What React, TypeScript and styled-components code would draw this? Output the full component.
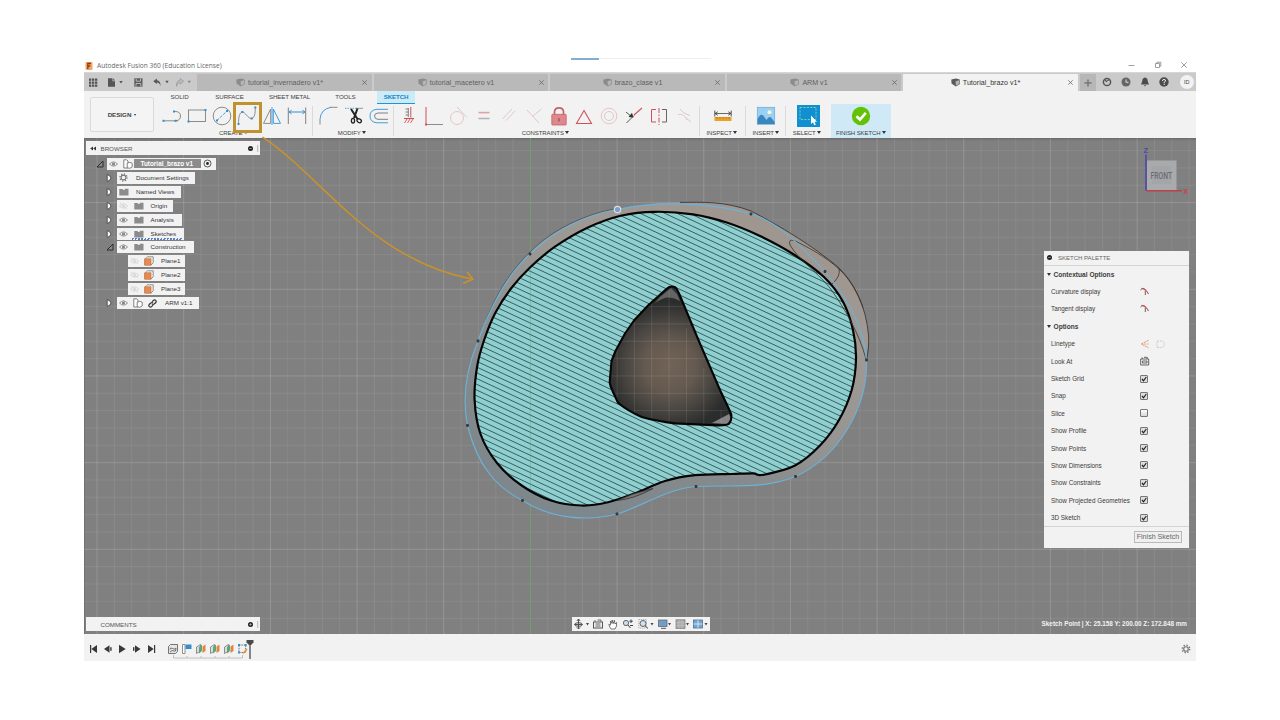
import React from "react";
import styled, { createGlobalStyle, css } from "styled-components";

const Global = createGlobalStyle`
  *{box-sizing:border-box}
  body{margin:0;background:#fff;font-family:"Liberation Sans",Arial,sans-serif;color:#3c3c3c}
  svg{display:block;flex:none}
`;

const Page = styled.div`width:1280px;height:720px;padding:57px 84px 59px;background:#fff;overflow:hidden;`;
const Window = styled.div`width:1112px;height:604px;display:flex;flex-direction:column;`;

/* title bar */
const TitleBar = styled.div`height:15px;display:flex;align-items:center;justify-content:space-between;position:relative;`;
const Title = styled.div`display:flex;align-items:center;gap:4px;padding:2px 0 0 1px;font:6.6px "Open Sans","Noto Sans",sans-serif;color:#666;white-space:nowrap;`;
const Controls = styled.div`display:flex;gap:19px;padding:1px 9.5px 0 0;align-items:center;`;
const Progress = styled.div`position:absolute;left:487px;top:1px;width:140px;height:2px;border-top:1px solid #eeeeee;`;
const ProgressFill = styled.div`width:28px;height:2px;margin-top:-1px;background:#84aed0;`;

/* document tabs */
const DocBar = styled.div`height:19px;background:#cacaca;display:flex;align-items:flex-end;border-top:1px solid #d6d6d6;`;
const Quick = styled.div`width:113px;height:17px;position:relative;display:flex;align-items:center;padding-left:4px;`;
const QuickSlot = styled.div<{ $w: number }>`width:${p => p.$w}px;display:flex;`;
const DocTab = styled.div<{ $active?: boolean }>`
  width:174.5px;height:17px;margin-right:2px;flex:none;display:flex;align-items:center;padding-left:5.5px;
  background:${p => (p.$active ? "#f2f2f2" : "#b9b9b9")};color:${p => (p.$active ? "#333" : "#5f5f5f")};border-radius:1px 1px 0 0;
`;
const DocName = styled.div`flex:1;display:flex;justify-content:center;align-items:center;gap:3px;font-size:7.1px;white-space:nowrap;padding-right:1px;`;
const DocClose = styled.div`width:14px;display:flex;justify-content:center;color:#6a6a6a;`;
const AddTab = styled.div`width:16px;height:17px;background:#b7b7b7;display:flex;align-items:center;justify-content:center;`;
const Account = styled.div`flex:1;height:18px;display:flex;align-items:center;padding-left:6px;gap:9.3px;`;
const Avatar = styled.div`width:14px;height:14px;border-radius:50%;background:#f2f2f2;font-size:5.5px;display:flex;align-items:center;justify-content:center;color:#444;margin-left:1px;`;

/* ribbon */
const Ribbon = styled.div`height:47px;background:#f2f2f2;display:flex;`;
const Workspace = styled.div`width:64px;height:35px;margin:6px 0 0 6px;border:1px solid #dadada;border-radius:2px;background:#f4f4f4;display:flex;align-items:center;justify-content:center;gap:3px;font-size:6.2px;font-weight:bold;color:#444;`;
const RibbonMain = styled.div`display:flex;flex-direction:column;`;
const RibbonTabs = styled.div`height:13px;display:flex;`;
const RibbonTab = styled.div<{ $w: number; $active?: boolean }>`
  width:${p => p.$w}px;display:flex;align-items:center;justify-content:center;font-size:6.2px;line-height:12px;padding-bottom:1px;letter-spacing:-.12px;color:#444;white-space:nowrap;
  ${p => p.$active && css`margin-left:11px;padding-bottom:0;background:#cdeaf7;border-bottom:1.5px solid #1b97d4;color:#1289c5;font-weight:bold;`}
`;
const Groups = styled.div`display:flex;height:34px;`;
const Group = styled.div<{ $w: number; $line?: boolean; $hot?: boolean }>`
  width:${p => p.$w}px;display:flex;flex-direction:column;
  background:${p => (p.$hot ? "#cfeaf6" : "linear-gradient(#dadada,#dadada) no-repeat right 2px/1px 30px")};
  ${p => !p.$line && !p.$hot && css`background:none;`}
`;
const Tools = styled.div<{ $pad: number; $center?: boolean }>`height:23px;display:flex;padding-left:${p => p.$pad}px;justify-content:${p => (p.$center ? "center" : "flex-start")};align-items:center;`;
const ToolSlot = styled.div`width:25px;display:flex;justify-content:center;position:relative;`;
const Picked = styled.div`position:absolute;left:-1.5px;top:-4px;width:29px;height:31px;border:3px solid #bf922f;`;
const GroupName = styled.div<{ $shift?: number }>`font-size:6px;letter-spacing:-.08px;display:flex;align-items:center;justify-content:center;gap:1.5px;height:11px;color:#3f3f3f;white-space:nowrap;padding-right:${p => p.$shift || 0}px;`;
const Caret = styled.i<{ $s?: number }>`display:inline-block;border:${p => p.$s || 2}px solid transparent;border-top:${p => (p.$s || 2) * 1.6}px solid #333;border-bottom:0;`;

/* viewport */
const Viewport = styled.div`height:496px;position:relative;background:linear-gradient(#6b6b6b,#808080 3px);box-shadow:inset 1px 0 #727272;`;
const Scene = styled.svg`position:absolute;left:0;top:0;overflow:visible;`;
const PanelBar = styled.div<{ $top: number }>`
  position:absolute;left:2px;top:${p => p.$top}px;width:174px;height:14px;background:#f2f2f2;display:flex;align-items:center;
  padding:0 1px 0 4px;font-size:6.2px;color:#555;gap:4.5px;
`;
const BarName = styled.span`flex:1;`;
const Tree = styled.div`position:absolute;left:10px;top:19px;display:flex;flex-direction:column;`;
const TreeRow = styled.div<{ $indent: number }>`height:13.93px;display:flex;align-items:center;padding-left:${p => p.$indent}px;`;
const Expand = styled.div`width:13px;display:flex;padding-left:1.5px;`;
const TreeItem = styled.div<{ $w: number }>`width:${p => p.$w}px;height:12px;background:#f2f2f2;display:flex;align-items:center;padding-left:2px;font-size:6.25px;color:#333;white-space:nowrap;position:relative;`;
const TreeIcon = styled.div<{ $w: number }>`width:${p => p.$w}px;display:flex;flex:none;`;
const TreeLabel = styled.span`line-height:12px;`;
const ActiveDash = styled.div`position:absolute;left:15px;right:1px;bottom:0;height:1.5px;background:repeating-linear-gradient(110deg,#5b7fc0 0 1.7px,transparent 1.7px 3px);`;
const RootLabel = styled.span`height:9px;width:67px;background:#8c8c8c;color:#fff;font-weight:bold;line-height:9px;padding-left:6.5px;margin-left:-4px;margin-right:2px;font-size:6.4px;`;

const Palette = styled.div`position:absolute;left:960px;top:112.5px;width:145px;height:297px;background:#f2f2f2;color:#3c3c3c;font-size:6.35px;`;
const PaletteHead = styled.div`height:15px;border-bottom:1px solid #d3d3d3;display:flex;align-items:center;padding-left:3px;gap:6px;font-size:6.1px;letter-spacing:-.05px;color:#666;`;
const PaletteSection = styled.div`height:17.4px;display:flex;align-items:center;gap:2.5px;padding-left:3px;font-weight:bold;font-size:6.6px;`;
const PaletteRow = styled.div`height:17.4px;display:flex;align-items:center;padding-left:7px;`;
const PaletteName = styled.span`width:88.5px;white-space:nowrap;`;
const PaletteFoot = styled.div`height:21px;border-top:1px solid #d3d3d3;display:flex;justify-content:flex-end;padding:4px 7px 0 0;`;
const FinishButton = styled.button`width:48px;height:12px;border:1px solid #b9b9b9;background:#efefef;font:7.1px "Liberation Sans",sans-serif;color:#666;padding:0;line-height:9px;white-space:nowrap;`;
const Check = styled.div<{ $on: boolean }>`width:8px;height:8px;border:1px solid #777;border-radius:1px;background:${p => (p.$on ? "#dcdcdc" : "linear-gradient(#fff,#d5d5d5)")};`;
const NavBar = styled.div`position:absolute;left:488px;top:479px;width:138px;height:14px;background:#f2f2f2;`;
const Status = styled.div`position:absolute;right:9px;top:481px;font-size:6.35px;line-height:10px;font-weight:bold;color:#f2f2f2;white-space:nowrap;`;

/* timeline */
const Timeline = styled.div`height:27px;background:#f2f2f2;display:flex;justify-content:space-between;`;

const Ic = ({ w = 20, h = 20, children }: { w?: number; h?: number; children?: React.ReactNode }) => (
  <svg width={w} height={h} viewBox={`0 0 ${w} ${h}`} fill="none">{children}</svg>
);
const B = "#2c93d8", G = "#808080", R = "#cf5258", LR = "#ecc3c5", LG = "#cfcfcf";
const dot = (x: number, y: number, c = B) => <rect x={x - 1} y={y - 1} width="2" height="2" fill={c} />;

const Cube = ({ dark }: { dark?: boolean }) => (
  <Ic w={9} h={9}>
    <path d="M.3 1.6L5 .4L8.7 1.4V6.3L4.8 8.6L.5 5.6Z" fill={dark ? "#5a5a5a" : "#8b8b8b"} />
    <path d="M4.6 3.2L8 2.2V6L4.9 7.8Z" fill={dark ? "#b5b5b5" : "#b4b4b4"} />
  </Ic>
);
const Cross = ({ s = 5, c = "#666" }: { s?: number; c?: string }) => (
  <Ic w={s} h={s}><path d={`M.3 .3L${s - 0.3} ${s - 0.3}M${s - 0.3} .3L.3 ${s - 0.3}`} stroke={c} strokeWidth=".8" /></Ic>
);
const Eye = ({ off }: { off?: boolean }) => (
  <Ic w={9} h={8}>
    <path d="M.5 4Q4.5 -.2 8.5 4Q4.5 8.2 .5 4Z" stroke={off ? "#d2d2d2" : "#858585"} strokeWidth=".9" />
    <circle cx="4.5" cy="4" r="1.6" fill={off ? "#dcdcdc" : "#858585"} />
    {off && <path d="M1 1L8 7" stroke="#d2d2d2" strokeWidth=".8" />}
  </Ic>
);
const Folder = () => <Ic w={10} h={8}><path d="M.3 1H3.5L4.3 2H5.5L6 .8H9.5V7.5H.3Z" fill="#8c8c8c" /></Ic>;
const Comp = () => (
  <Ic w={10} h={10}>
    <path d="M.8 .8H3.7L5 2V9H.8Z" stroke="#666" strokeWidth=".8" fill="#fff" />
    <path d="M4.2 4.2L6.8 3.4L9.2 4.2V8L6.8 9.3L4.2 8.7Z" stroke="#666" strokeWidth=".8" fill="#fff" />
  </Ic>
);
const Plane = () => (
  <Ic w={10} h={10}><path d="M3.2 .8H9.2V6.8L6.8 9.2" stroke="#777" strokeWidth=".8" /><path d="M3.2 .8L.8 3V9.2" stroke="#777" strokeWidth=".6" /><rect x=".8" y="2.8" width="6.2" height="6.4" fill="#e88a50" stroke="#c06a34" strokeWidth=".6" /></Ic>
);
const Gear = ({ s = 9 }: { s?: number }) => (
  <svg width={s} height={s} viewBox="0 0 9 9" fill="none"><circle cx="4.5" cy="4.5" r="2.4" stroke="#777" strokeWidth="1.1" /><circle cx="4.5" cy="4.5" r="3.6" stroke="#777" strokeWidth="1.2" strokeDasharray="1.2 1.63" /></svg>
);
const Link = () => (
  <Ic w={9} h={9}><g stroke="#333" strokeWidth="1.2"><path d="M4 2.8L5.6 1.2Q6.6 .4 7.7 1.4Q8.6 2.4 7.8 3.5L6.2 5Q5 5.8 4 4.8" /><path d="M5 6.2L3.4 7.8Q2.3 8.6 1.3 7.6Q.4 6.6 1.2 5.5L2.8 4Q4 3.2 5 4.2" /></g></Ic>
);
const Closed = () => <Ic w={6} h={8}><path d="M1.2 .5Q4.6 1.6 5 4Q4.6 6.4 1.2 7.5Z" fill="#f6f6f6" stroke="#3c3c3c" strokeWidth=".8" /></Ic>;
const Opened = () => <Ic w={8} h={8}><path d="M7 1V7H1Z" fill="#888" stroke="#222" strokeWidth=".9" /></Ic>;
const Knob = ({ plus }: { plus?: boolean }) => <Ic w={5} h={5}><circle cx="2.5" cy="2.5" r="2.5" fill="#222" /><path d={plus ? "M1.2 2.5H3.8M2.5 1.2V3.8" : "M1.2 2.5H3.8"} stroke="#ccc" strokeWidth=".6" /></Ic>;
const Grip = () => <Ic w={2} h={7}><path d="M.7 0V7" stroke="#aaa" strokeWidth=".8" /></Ic>;

const createTools = [
  <Ic><path d="M1 14.8H16" stroke={G} strokeWidth=".9" /><path d="M11 5.5H14Q18.5 6 18.5 10Q18.5 14.3 14 14.8" stroke={G} strokeWidth=".9" />{dot(1.5, 14.8)}{dot(12, 5.5)}{dot(13.5, 14.8)}</Ic>,
  <Ic><rect x="1.5" y="4" width="17" height="11.5" stroke={G} strokeWidth=".9" />{dot(1.5, 15.5)}{dot(18.5, 4)}</Ic>,
  <Ic><circle cx="10" cy="10" r="8.8" stroke={G} strokeWidth=".9" /><path d="M5 14.5L15 5" stroke={B} strokeWidth=".9" strokeDasharray="3 1.3" />{dot(5, 14.5)}{dot(15, 5)}</Ic>,
  <Ic><path d="M1.5 18C1.5 11 2.5 6.5 5.3 6C8.5 6 10.5 12.5 14.7 12.5C17.8 11.5 18.3 7 18.3 1.5" stroke={G} strokeWidth=".9" />{dot(1.5, 18)}{dot(5.3, 6)}{dot(14.7, 12.5)}{dot(18.3, 1.5)}</Ic>,
  <Ic><path d="M8.7 3V17.4H1.5Z" stroke={G} strokeWidth=".9" /><path d="M11.3 3V17.4H18.5Z" stroke={B} strokeWidth=".9" /><path d="M10 1V19" stroke={B} strokeWidth=".8" /></Ic>,
  <Ic><path d="M1.3 1.5V18M18.7 1.5V18" stroke={G} strokeWidth="1" /><path d="M2 6H18M4.5 4.2L2 6L4.5 7.8M15.5 4.2L18 6L15.5 7.8" stroke={B} strokeWidth="1" /></Ic>,
];
const modifyTools = [
  <Ic><path d="M1 13Q2 3 12 1.3" stroke={B} strokeWidth=".9" /><path d="M11 1.3H18.5M1 13V18.5" stroke={G} strokeWidth=".9" /></Ic>,
  <Ic><path d="M1 2.3H12" stroke={B} strokeWidth=".8" strokeDasharray="1.5 1" /><path d="M12 2.3H19" stroke={G} strokeWidth=".8" /><path d="M7 3L13.5 13M13.5 2.5L10 12" stroke="#222" strokeWidth="2" /><ellipse cx="9" cy="14.7" rx="1.6" ry="2.4" stroke="#222" strokeWidth="1.3" /><ellipse cx="15.2" cy="14.8" rx="2.3" ry="1.8" stroke="#222" strokeWidth="1.3" transform="rotate(35 15.2 14.8)" /></Ic>,
  <Ic><path d="M19 3.3H8Q1 3.8 1 10Q1 16.2 8 16.8H19" stroke={B} strokeWidth=".9" /><path d="M19 7H9Q5.5 7.2 5.5 10Q5.5 13.2 9 13.3H19" stroke={G} strokeWidth="1" /></Ic>,
];
const constraintTools = [
  <Ic><path d="M11.8 1V11.5" stroke={R} strokeWidth="1" /><path d="M9.3 2V11M6.5 3H9M6.5 6H9M6.5 9H9" stroke={G} strokeWidth="1" /><path d="M5 12.5H15" stroke={R} strokeWidth="1.1" /><path d="M5.5 17L8 13M8.5 17L11 13M11.5 17L14 13" stroke={R} strokeWidth=".9" /></Ic>,
  <Ic><path d="M2 1V18.5" stroke={R} strokeWidth="1" /><path d="M3 18.5H19" stroke={G} strokeWidth=".9" />{dot(2, 18.5, R)}</Ic>,
  <Ic><circle cx="8" cy="12" r="6.5" stroke={LR} /><path d="M8 1L18 11.5" stroke={LG} /></Ic>,
  <Ic><path d="M4.5 6.6H15.5" stroke="#e1a0a3" strokeWidth="1.6" /><path d="M4.5 12.5H15.5" stroke="#b4b4b4" strokeWidth="1.6" /></Ic>,
  <Ic><path d="M3.5 13L13 3" stroke={LG} /><path d="M7 14.5L16 5" stroke={LR} /></Ic>,
  <Ic><path d="M3 4L15 17" stroke={LR} /><path d="M8.5 10.5L17.5 3" stroke={LG} /></Ic>,
  <Ic><path d="M5.5 9V5.5Q6 1.8 10 1.8Q14 1.8 14.5 5.5V9" stroke="#c66267" strokeWidth="1.7" /><rect x="2.8" y="8.3" width="14.4" height="10.7" rx=".7" fill="#dd888c" stroke="#c66267" strokeWidth=".8" /><path d="M10 12V15.5" stroke="#a8474c" strokeWidth="1.2" /></Ic>,
  <Ic><path d="M10 4.5L17.5 17.5H2.5Z" stroke={R} strokeWidth="1.1" /></Ic>,
  <Ic><circle cx="10" cy="10" r="7.8" stroke={LR} /><circle cx="10" cy="10" r="4.5" stroke="#d5cccc" /></Ic>,
  <Ic><path d="M10 9L18 2" stroke={R} strokeWidth="1.1" /><path d="M2.5 17L10 9.5M2 6L8 11" stroke="#444" strokeWidth=".9" /><path d="M4.5 11L9.5 11.5L8 6.8Z" fill="#333" /></Ic>,
  <Ic><path d="M7 3.5H2.5V16H7" stroke={R} /><path d="M13 3.5H17.5V16H13" stroke="#666" /><path d="M10 2V19" stroke={R} strokeDasharray="5 1.5 1.5 1.5" /></Ic>,
  <Ic><path d="M6 3Q9 8 16 9.5" stroke={LG} /><path d="M4 8.5Q10 7 13 14" stroke={LR} /><path d="M11 11L17 16" stroke={LR} /></Ic>,
];
const InspectIc = () => <Ic><path d="M1.8 4.5V10.5M18.2 4.5V10.5" stroke="#444" strokeWidth=".9" /><path d="M2 7.5H18M4.8 5.7L2 7.5L4.8 9.3M15.2 5.7L18 7.5L15.2 9.3" stroke="#444" strokeWidth=".8" /><rect x="1.5" y="11" width="17" height="4" fill="#eba023" /><path d="M4 11V12.5M7 11V12.5M10 11V12.5M13 11V12.5M16 11V12.5" stroke="#93631a" strokeWidth=".7" /></Ic>;
const InsertIc = () => <Ic><rect x="1.3" y="1.3" width="17.4" height="17" fill="#9bd0f5" stroke="#6fa8d2" strokeWidth=".7" /><circle cx="13.5" cy="6.3" r="2" fill="#fff6c9" /><path d="M1.5 18V13Q5 6 8 10.5L10.5 14Q13 9.5 15.5 12L18.5 16V18Z" fill="#3c86c0" /></Ic>;
const SelectIc = () => <Ic w={23} h={22}><rect width="23" height="22" fill="#118fd3" /><rect x="3" y="2.5" width="16" height="12" stroke="#81d2a0" strokeDasharray="2.2 1.2" strokeWidth=".9" /><path d="M14 10.5V19L16 17.3L17.3 20.2L18.8 19.5L17.5 16.7H20Z" fill="#fff" /></Ic>;
const FinishIc = () => <Ic><circle cx="10" cy="10" r="9.2" fill="#63c204" /><path d="M5.5 10.2L9 13.5L14.8 6.8" stroke="#fff" strokeWidth="2.6" /></Ic>;

type P = [number, number];
/* closed Catmull-Rom spline through the given points */
const spline = (p: P[]) => {
  const n = p.length;
  const at = (i: number) => p[(i + n) % n];
  let d = `M${p[0][0]} ${p[0][1]}`;
  for (let i = 0; i < n; i++) {
    const [a, b, c, e] = [at(i - 1), at(i), at(i + 1), at(i + 2)];
    d += `C${(b[0] + (c[0] - a[0]) / 6).toFixed(2)} ${(b[1] + (c[1] - a[1]) / 6).toFixed(2)} ${(c[0] - (e[0] - b[0]) / 6).toFixed(2)} ${(c[1] - (e[1] - b[1]) / 6).toFixed(2)} ${c[0]} ${c[1]}`;
  }
  return d + "Z";
};
const rim = spline([[477.2, 366], [484.5, 339], [495.5, 312.5], [511, 288.5], [530, 267.5], [555, 246.7], [588, 227.5], [621.7, 215.5], [655, 211.8], [693, 214.3], [726.7, 222.5], [760, 236], [793, 254], [824, 277], [843, 301.7], [853, 330], [856, 359], [851.7, 390], [839, 420], [820, 445.5], [795, 465.5], [765, 474.5], [757.5, 474.7], [753, 473.4], [731.7, 474], [695, 475.2], [665, 481], [635, 493.3], [608, 502.3], [581.7, 505.5], [551, 500.5], [521.7, 485.5], [497, 463], [480.5, 434], [474.6, 400]]);
const hole = "M667 288.5L648 305.5L634 320.5L625 333.5L615.5 351L611.5 361L609.7 382Q610 386 613 392L618 402.7Q628 411 641.7 417Q656 421 675 423.4L718 425.4Q727 425.5 729 423.8Q732 420 731.3 414.5L728.5 408L720 390L698 339L679.5 294.5Q677 288.5 675.5 287.5Q671 285 667 288.5Z";
const leftCurve = "C478 468 498 488 522.5 500.5C550 518 585 522 617 514C643 506 666 489 696 486.5C730 484.5 762 490 795.5 476.5C838 457 868 408 866.5 360";
const curve = `M617.5 209.5C584 215 553 232 530 254C508 274 490 308 478 341C466 370 462 398 467.5 425.5${leftCurve}C864 325 846 297 825 271.5C803 249 780 222 751 214C710 202 655 201 617.5 209.5Z`;
const silhouette = "C866 306 854 282 838 267C813 246 780 226 751 211C725 201 702 202.2 680 202.4";
const body = `M617.5 209C584 214.5 553 230 530 252C507 276 490 308 478 341C466 370 462 398 467.5 425.5${leftCurve}C867 352 869 346 868.5 335${silhouette}C655 203 635 205 617.5 209Z`;
const knots: P[] = [[530, 254], [478, 341], [467.5, 425.5], [522.5, 500.5], [617, 514], [696, 486.5], [795.5, 476.5], [866.5, 360], [825, 271.5], [751, 214]];
const range = (n: number) => Array.from({ length: n }, (_, i) => i);

const Drawing = () => (
  <Scene width="1112" height="496" viewBox="84 138 1112 496" fill="none">
    <defs>
      <clipPath id="section"><path d={rim + hole} clipRule="evenodd" /></clipPath>
      <clipPath id="view"><rect x="84" y="138" width="1112" height="496" /></clipPath>
      <linearGradient id="bodyFill" x1="600" y1="520" x2="760" y2="200" gradientUnits="userSpaceOnUse">
        <stop offset="0" stopColor="#7e878b" /><stop offset=".25" stopColor="#858a8c" /><stop offset=".5" stopColor="#969593" /><stop offset=".75" stopColor="#9f9994" /><stop offset="1" stopColor="#9f958d" />
      </linearGradient>
      <radialGradient id="cavity" cx="670" cy="366" r="64" gradientUnits="userSpaceOnUse">
        <stop offset="0" stopColor="#716356" /><stop offset=".4" stopColor="#655a50" /><stop offset=".72" stopColor="#474440" /><stop offset="1" stopColor="#2b2c2c" />
      </radialGradient>
    </defs>
    <g clipPath="url(#view)">
      <g stroke="#fff">
        {range(66).map(i => { const k = i - 26; return <path key={i} d={`M${530.4 + k * 17.335} 138V634`} strokeOpacity={k % 5 ? 0.075 : 0.16} />; })}
        {range(30).map(i => { const k = i - 4; return <path key={i} d={`M84 ${202.6 + k * 17.335}H1196`} strokeOpacity={(k % 5) ? 0.075 : 0.16} />; })}
      </g>
      <path d="M530.4 138V634" stroke="#5fa45c" strokeOpacity=".65" />
      <path d={body} fill="url(#bodyFill)" />
      <path d="M486 320C498 290 512 270 530 252C553 229 584 214.5 617.5 208.3" stroke="#4a4a49" strokeWidth=".7" />
      <path d={`M866.5 360C868.5 350 869 344 868.5 335${silhouette}`} stroke="#3a3735" strokeWidth=".9" />
      <path d={rim + hole} fillRule="evenodd" fill="#8fcfcf" />
      <g clipPath="url(#section)" stroke="#35585a" strokeWidth=".95">
        {range(100).map(i => <path key={i} d={`M460 ${20 + i * 5.75}L880 ${20 + i * 5.75 + 196}`} />)}
      </g>
      <path d="M530.4 268V490" stroke="#5fa45c" strokeOpacity=".35" />
      <path d={hole} fill="url(#cavity)" />
      <path d="M712 423L729 414L731 419L727 424Z" fill="#858585" />
      <path d="M660 297L671 288L677 294L680 301Q668 293 655 303Z" fill="#777" fillOpacity=".75" />
      <g stroke="#fff" strokeOpacity=".1">
        {range(7).map(i => <path key={i} d={`M${617.1 + i * 17.335} ${[348, 322, 303, 290, 328, 368, 410][i]}V${[398, 415, 420, 422, 423, 424, 424][i]}`} />)}
        {range(7).map(i => <path key={i} d={`M${[648, 632, 620, 613, 611, 614, 634][i]} ${306.6 + i * 17.335}H${[683, 690, 698, 705, 713, 720, 727][i]}`} />)}
      </g>
      <path d={rim} stroke="#050505" strokeWidth="2.2" />
      <path d={hole} stroke="#050505" strokeWidth="2.1" strokeLinejoin="round" />
      <g stroke="#38322f" strokeWidth=".8">
        <path d="M866 359C859 333 845 309 830 288C815 270 798 259 790 245Q788 239 794 240.5C808 247 826 257 839 269C851 280 859 296 863 308" />
        <path d="M839 269Q841 276 832 284" />
        <path d="M617 500.5Q634 499 653 488.5L633 494Z" fill="#777" />
      </g>
      <path d={curve} stroke="#6bb1d8" strokeWidth="1.15" />
      {knots.map(([x, y]) => <rect key={x} x={x - 1.4} y={y - 1.4} width="2.8" height="2.8" rx=".8" fill="#363839" />)}
      <circle cx="617.5" cy="209.6" r="3.2" fill="#7b9fce" stroke="#dedede" strokeWidth="1.2" />
    </g>
    <path d="M262.5 137.2C322 176 371 260 472 279" stroke="#c9922a" strokeWidth="1.6" />
    <path d="M467.2 272L472.8 279.2L463.2 283.2" stroke="#c9922a" strokeWidth="1.6" />
    <rect x="1147" y="160.5" width="29.5" height="29.5" fill="#a9aaac" />
    <rect x="1151.5" y="166" width="20" height="18" fill="#a4a5a8" />
    <text x="1161.3" y="178.6" textAnchor="middle" fontSize="8.4" textLength="21.5" lengthAdjust="spacingAndGlyphs" fill="#6b6c70" fontFamily="Roboto" fontWeight="500">FRONT</text>
    <path d="M1146 154.5V190.5" stroke="#4846ad" strokeWidth="1.5" /><path d="M1146 190.7H1182" stroke="#bd4148" strokeWidth="1.5" />
    <text x="1143.4" y="153.4" fontSize="7.5" fill="#4846ad" fontWeight="bold" fontFamily="Liberation Sans">Z</text>
    <text x="1183.2" y="193.9" fontSize="7.5" fill="#c4434a" fontWeight="bold" fontFamily="Liberation Sans">X</text>
  </Scene>
);

const tree: { w: number; open?: boolean; leaf?: boolean; dashed?: boolean; label: string; icons: [number, React.ReactNode][] }[] = [
  { w: 78, label: "Document Settings", icons: [[17, <Gear />]] },
  { w: 64, label: "Named Views", icons: [[17, <Folder />]] },
  { w: 55.5, label: "Origin", icons: [[14.5, <Eye off />], [17, <Folder />]] },
  { w: 65, label: "Analysis", icons: [[14.5, <Eye />], [17, <Folder />]] },
  { w: 67, label: "Sketches", dashed: true, icons: [[14.5, <Eye />], [17, <Folder />]] },
  { w: 76.5, open: true, label: "Construction", icons: [[14.5, <Eye />], [17, <Folder />]] },
  { w: 57, leaf: true, label: "Plane1", icons: [[14, <Eye off />], [17, <Plane />]] },
  { w: 57, leaf: true, label: "Plane2", icons: [[14, <Eye off />], [17, <Plane />]] },
  { w: 57, leaf: true, label: "Plane3", icons: [[14, <Eye off />], [17, <Plane />]] },
  { w: 81.5, label: "ARM v1:1", icons: [[14, <Eye />], [14.5, <Comp />], [17.5, <Link />]] },
];

const checks: [string, boolean][] = [["Sketch Grid", true], ["Snap", true], ["Slice", false], ["Show Profile", true], ["Show Points", true], ["Show Dimensions", true], ["Show Constraints", true], ["Show Projected Geometries", true], ["3D Sketch", true]];
const CurveIc = () => <Ic w={9} h={9}><path d="M.5 3Q1.5 1 4.5 1.8M5.3 3.5V8" stroke="#555" strokeWidth=".9" /><path d="M1.5 1.3Q5.5 1.5 8.5 7" stroke="#c9474b" strokeWidth="1.1" /></Ic>;

const tabs: [string, boolean?][] = [["tutorial_invernadero v1*"], ["tutorial_macetero v1"], ["brazo_clase v1"], ["ARM v1"], ["Tutorial_brazo v1*", true]];

const NavIcons = () => (
  <Ic w={138} h={14}>
    <path d="M6.5 2V12M2.5 7.5H10.5M4.8 4L6.5 2L8.2 4M4.8 10.3L6.5 12L8.2 10.3" stroke="#444" strokeWidth=".9" /><ellipse cx="6.5" cy="7.5" rx="3.8" ry="1.8" stroke="#444" strokeWidth=".9" />
    <rect x="21.5" y="5" width="9" height="6" stroke="#555" /><path d="M23 4.5V3M25.5 3H29V4.5M23.5 7H28.5M23.5 9H28.5" stroke="#555" strokeWidth=".9" />
    <path d="M38.5 11.5L36.8 7.5L38.5 8V4L40 6.5V3L41.3 6.5L42.3 3.2L43 7L44.5 5.5V9L43 12H39Z" fill="#fff" stroke="#555" strokeWidth=".8" />
    <circle cx="54" cy="6" r="2.6" fill="#cfe0ee" stroke="#555" strokeWidth=".9" /><path d="M56 8L58.5 11M59 2.5V6M57.4 4.2H60.8M58 8.5H61" stroke="#444" />
    <rect x="66.8" y="2.5" width="7.5" height="8.5" stroke="#999" strokeWidth=".7" strokeDasharray="1.3 .8" /><circle cx="71" cy="6.5" r="3" fill="#cfe0ee" stroke="#555" strokeWidth=".9" /><path d="M73 8.7L76 11.5" stroke="#444" />
    <rect x="86.5" y="3" width="8.5" height="6.5" fill="#709ec5" stroke="#667" strokeWidth=".8" /><path d="M89 11.3H94" stroke="#555" />
    <rect x="104" y="2.8" width="9" height="8.7" fill="#a9a9a9" stroke="#777" strokeWidth=".7" /><path d="M107 3V11.5M110 3V11.5M104 5.7H113M104 8.6H113" stroke="#ccc" strokeWidth=".5" />
    <rect x="121.5" y="3" width="9" height="8" fill="#75a6d2" stroke="#4c6f90" strokeWidth=".8" /><path d="M126 3V11M121.5 7H130.5" stroke="#e8f0f8" strokeWidth=".8" />
    {[15.5, 80, 97.5, 115.5, 134].map(x => <path key={x} d={`M${x - 1.5} 6H${x + 1.5}L${x} 8.5Z`} fill="#444" />)}
  </Ic>
);

const TimelineIcons = () => (
  <Ic w={176} h={27}>
    <g fill="#383838">
      <rect x="6" y="11" width="1.2" height="8" /><path d="M13 11V19L7.3 15Z" />
      <path d="M25.5 11.3V18.7L20 15Z" /><rect x="26.2" y="13.2" width="1.4" height="3.6" /><path d="M35 10.7V19.3L41.7 15Z" />
      <rect x="49" y="13.2" width="1.4" height="3.6" /><path d="M51 11.3L56.5 15L51 18.7Z" /><path d="M64 11V19L69.7 15Z" /><rect x="70" y="11" width="1.2" height="8" />
    </g>
    <path d="M84.5 12.5L86.5 10.5H93.5V17.5L91.5 19.5H84.5Z" fill="#e5e5e5" stroke="#666" strokeWidth=".9" /><path d="M86 15.5Q86 13 88.5 14.5T92 14M86 18Q88 15.5 90 17T92 14" stroke="#666" strokeWidth=".9" />
    <path d="M98.5 10.5H101V19.5H98.5Z" fill="#fff" stroke="#777" strokeWidth=".8" /><rect x="101.5" y="10.5" width="6" height="4.5" fill="#398bcb" />
    {[112.5, 126.5, 140.5].map(x => <g key={x}><path d={`M${x} 13L${x + 4} 10.5V17L${x} 19.5Z`} fill="#ddd" stroke="#777" strokeWidth=".8" /><path d={`M${x + 2.5} 13L${x + 5.5} 10.5V17L${x + 2.5} 19.5Z`} fill="#55a97b" /><path d={`M${x + 6} 12.5L${x + 9} 10.5V17L${x + 6} 19Z`} fill="#e58347" /></g>)}
    <rect x="155" y="11" width="6.7" height="7.5" stroke="#666" strokeDasharray="1.6 .8" strokeWidth=".9" />{dot(155, 11)}{dot(155, 18.5)}{dot(161.7, 11)}<path d="M159 19.5L163 15" stroke="#e59a3a" strokeWidth="1.5" />
    <path d="M89.5 21V24H158.5V21M103 22V24M117 22V24M131 22V24M145 22V24" stroke="#b5b5b5" strokeWidth=".8" />
    <path d="M162.5 6H169.5V8.5L167 11H165L162.5 8.5Z" fill="#4a4a4a" /><path d="M166 8V25" stroke="#4a4a4a" strokeWidth="1.3" />
  </Ic>
);

export default function App() {
  return (
    <Page>
      <Global />
      <Window>
        <TitleBar>
          <Title>
            <Ic w={8} h={8}><rect x=".5" width="7" height="8" rx="1" fill="#f0a56b" /><path d="M2.8 7V1.5H6M2.8 4H5.3" stroke="#8f3c0f" strokeWidth="1.3" /></Ic>
            Autodesk Fusion 360 (Education License)
          </Title>
          <Controls>
            <Ic w={7} h={6}><path d="M.5 3.5H6.5" stroke="#888" strokeWidth=".8" /></Ic>
            <Ic w={8} h={8}><path d="M1.5 2.5H5.5V6.5H1.5ZM2.8 2.3V1.2H6.8V5.2H5.7" stroke="#888" strokeWidth=".8" /></Ic>
            <Cross s={6} c="#888" />
          </Controls>
          <Progress><ProgressFill /></Progress>
        </TitleBar>
        <DocBar>
          <Quick>
            <QuickSlot $w={20}><Ic w={10} h={9}><g fill="#555">{range(9).map(i => <rect key={i} x={1 + (i % 3) * 3} y={0.5 + Math.floor(i / 3) * 3} width="2.3" height="2.3" />)}</g></Ic></QuickSlot>
            <QuickSlot $w={26}><Ic w={16} h={9}><path d="M0 .3H4.5V3.2H7V8.7H0ZM5.2 .3L7 2.4H5.2Z" fill="#555" /><path d="M11.2 3H14.8L13 5.5Z" fill="#555" /></Ic></QuickSlot>
            <QuickSlot $w={19}><Ic w={9} h={9}><path d="M.3 .3H8.5V8.7H.3Z" fill="#5b5b5b" /><path d="M2.2 .7V3.2H6.5V.7M2 8.5V5.5H6.8V8.5" stroke="#ccc" strokeWidth=".8" /></Ic></QuickSlot>
            <QuickSlot $w={23}><Ic w={18} h={9}><path d="M.3 3.3L3.8 .5V2.2Q7.8 2.5 7.5 8.3Q6.8 4.5 3.8 4.5V6.1Z" fill="#555" /><path d="M12.2 2.8H15.7L14 5.3Z" fill="#555" /></Ic></QuickSlot>
            <QuickSlot $w={18}><Ic w={18} h={9}><path d="M7.7 3.3L4.2 .5V2.2Q.2 2.5 .5 8.3Q1.2 4.5 4.2 4.5V6.1Z" fill="#bbb" stroke="#888" strokeWidth=".5" /><path d="M11.5 2.8H15L13.2 5.3Z" fill="#888" /></Ic></QuickSlot>
          </Quick>
          {tabs.map(([name, active]) => (
            <DocTab key={name} $active={active}>
              <DocName><Cube dark={active} />{name}</DocName>
              <DocClose><Cross /></DocClose>
            </DocTab>
          ))}
          <AddTab><Ic w={8} h={8}><path d="M4 .5V7.5M.5 4H7.5" stroke="#777" strokeWidth="1.5" /></Ic></AddTab>
          <Account>
            <Ic w={10} h={10}><circle cx="5" cy="5" r="3.6" stroke="#555" strokeWidth="1.5" /><path d="M5 5L2.5 2.5M5 3.5L7.5 3" stroke="#555" strokeWidth="1.1" /></Ic>
            <Ic w={10} h={10}><circle cx="5" cy="5" r="4.5" fill="#666" /><path d="M5 2.5V5.3H7.5" stroke="#ddd" strokeWidth="1" /></Ic>
            <Ic w={10} h={10}><path d="M5 .5Q7.8 1 7.8 4.5L9 7.5H1L2.2 4.5Q2.2 1 5 .5ZM3.8 8.2H6.2L5 9.5Z" fill="#4b4b4b" /></Ic>
            <Ic w={10} h={10}><circle cx="5" cy="5" r="4.7" fill="#4b4b4b" /><path d="M3.4 4Q3.5 2.4 5 2.4Q6.7 2.5 6.5 4Q6.3 4.8 5.2 5.2V6.3M5.2 7V8" stroke="#eee" strokeWidth="1" /></Ic>
            <Avatar>ID</Avatar>
          </Account>
        </DocBar>
        <Ribbon>
          <Workspace>DESIGN <Caret $s={1.8} /></Workspace>
          <RibbonMain>
            <RibbonTabs>
              <RibbonTab $w={51}>SOLID</RibbonTab>
              <RibbonTab $w={49}>SURFACE</RibbonTab>
              <RibbonTab $w={71}>SHEET METAL</RibbonTab>
              <RibbonTab $w={41}>TOOLS</RibbonTab>
              <RibbonTab $w={38} $active>SKETCH</RibbonTab>
            </RibbonTabs>
            <Groups>
              <Group $w={159} $line>
                <Tools $pad={5.5}>{createTools.map((t, i) => <ToolSlot key={i}>{t}{i === 3 && <Picked />}</ToolSlot>)}</Tools>
                <GroupName>CREATE <Caret /></GroupName>
              </Group>
              <Group $w={81} $line><Tools $pad={3.5}>{modifyTools.map((t, i) => <ToolSlot key={i}>{t}</ToolSlot>)}</Tools><GroupName $shift={3}>MODIFY <Caret /></GroupName></Group>
              <Group $w={306} $line><Tools $pad={2.5}>{constraintTools.map((t, i) => <ToolSlot key={i}>{t}</ToolSlot>)}</Tools><GroupName $shift={3}>CONSTRAINTS <Caret /></GroupName></Group>
              <Group $w={46} $line><Tools $pad={0} $center><InspectIc /></Tools><GroupName $shift={2}>INSPECT <Caret /></GroupName></Group>
              <Group $w={40} $line><Tools $pad={0} $center><InsertIc /></Tools><GroupName>INSERT <Caret /></GroupName></Group>
              <Group $w={45}><Tools $pad={0} $center><SelectIc /></Tools><GroupName $shift={3}>SELECT <Caret /></GroupName></Group>
              <Group $w={60} $hot><Tools $pad={0} $center><FinishIc /></Tools><GroupName>FINISH SKETCH <Caret /></GroupName></Group>
            </Groups>
          </RibbonMain>
        </Ribbon>
        <Viewport>
          <Drawing />
          <PanelBar $top={3}>
            <Ic w={6} h={5}><path d="M3 .5V4.5L.2 2.5ZM6 .5V4.5L3.2 2.5Z" fill="#333" /></Ic>
            <BarName>BROWSER</BarName><Knob /><Grip />
          </PanelBar>
          <Tree>
            <TreeRow $indent={0}>
              <Expand><Opened /></Expand>
              <TreeItem $w={109}>
                <TreeIcon $w={14}><Eye /></TreeIcon>
                <TreeIcon $w={15}><Comp /></TreeIcon>
                <RootLabel>Tutorial_brazo v1</RootLabel>
                <Ic w={9} h={9}><circle cx="4.5" cy="4.5" r="3.5" stroke="#333" strokeWidth=".8" /><circle cx="4.5" cy="4.5" r="1.4" fill="#222" /></Ic>
              </TreeItem>
            </TreeRow>
            {tree.map(r => (
              <TreeRow key={r.label} $indent={r.leaf ? 34 : 10}>
                {!r.leaf && <Expand>{r.open ? <Opened /> : <Closed />}</Expand>}
                <TreeItem $w={r.w}>
                  {r.icons.map(([w, ic], i) => <TreeIcon key={i} $w={w}>{ic}</TreeIcon>)}
                  <TreeLabel>{r.label}</TreeLabel>
                  {r.dashed && <ActiveDash />}
                </TreeItem>
              </TreeRow>
            ))}
          </Tree>
          <Palette>
            <PaletteHead><Knob />SKETCH PALETTE</PaletteHead>
            <PaletteSection><Caret $s={2.4} />Contextual Options</PaletteSection>
            <PaletteRow><PaletteName>Curvature display</PaletteName><CurveIc /></PaletteRow>
            <PaletteRow><PaletteName>Tangent display</PaletteName><CurveIc /></PaletteRow>
            <PaletteSection><Caret $s={2.4} />Options</PaletteSection>
            <PaletteRow><PaletteName>Linetype</PaletteName>
              <Ic w={27} h={10}><path d="M8.5 1.3L1.2 5L8.5 8.7" stroke="#dc9b71" strokeWidth="1" strokeDasharray="2.4 .6" /><path d="M4 5H8.5" stroke="#dc9b71" strokeWidth=".8" strokeDasharray="2 .8" /><path d="M17 2H21.5Q24.5 2.5 24.5 5Q24.5 8 21.5 8.5H17Z" stroke="#c6c6c6" strokeWidth=".9" strokeDasharray="2 .8" /></Ic>
            </PaletteRow>
            <PaletteRow><PaletteName>Look At</PaletteName><Ic w={10} h={10}><path d="M.7 3H8.7V9H.7ZM2.2 3V1.3M4 1.3H7.2V3M2.5 5H7V7H2.5Z" stroke="#555" strokeWidth=".9" /></Ic></PaletteRow>
            {checks.map(([n, on]) => (
              <PaletteRow key={n}><PaletteName>{n}</PaletteName>
                <Check $on={on}>{on && <Ic w={6} h={6}><path d="M1 3L2.5 4.8L5.3 1" stroke="#222" strokeWidth="1.2" /></Ic>}</Check>
              </PaletteRow>
            ))}
            <PaletteFoot><FinishButton>Finish Sketch</FinishButton></PaletteFoot>
          </Palette>
          <PanelBar $top={479}>
            <Ic w={6} h={5} />
            <BarName>COMMENTS</BarName><Knob plus /><Grip />
          </PanelBar>
          <NavBar><NavIcons /></NavBar>
          <Status>Sketch Point | X: 25.158 Y: 200.00 Z: 172.848 mm</Status>
        </Viewport>
        <Timeline>
          <TimelineIcons />
          <Ic w={16} h={27}><g transform="translate(1.5 10.5)"><circle cx="4.5" cy="4.5" r="2.3" stroke="#777" strokeWidth="1.1" /><circle cx="4.5" cy="4.5" r="3.7" stroke="#777" strokeWidth="1.4" strokeDasharray="1.4 1.5" /></g></Ic>
        </Timeline>
      </Window>
    </Page>
  );
}
